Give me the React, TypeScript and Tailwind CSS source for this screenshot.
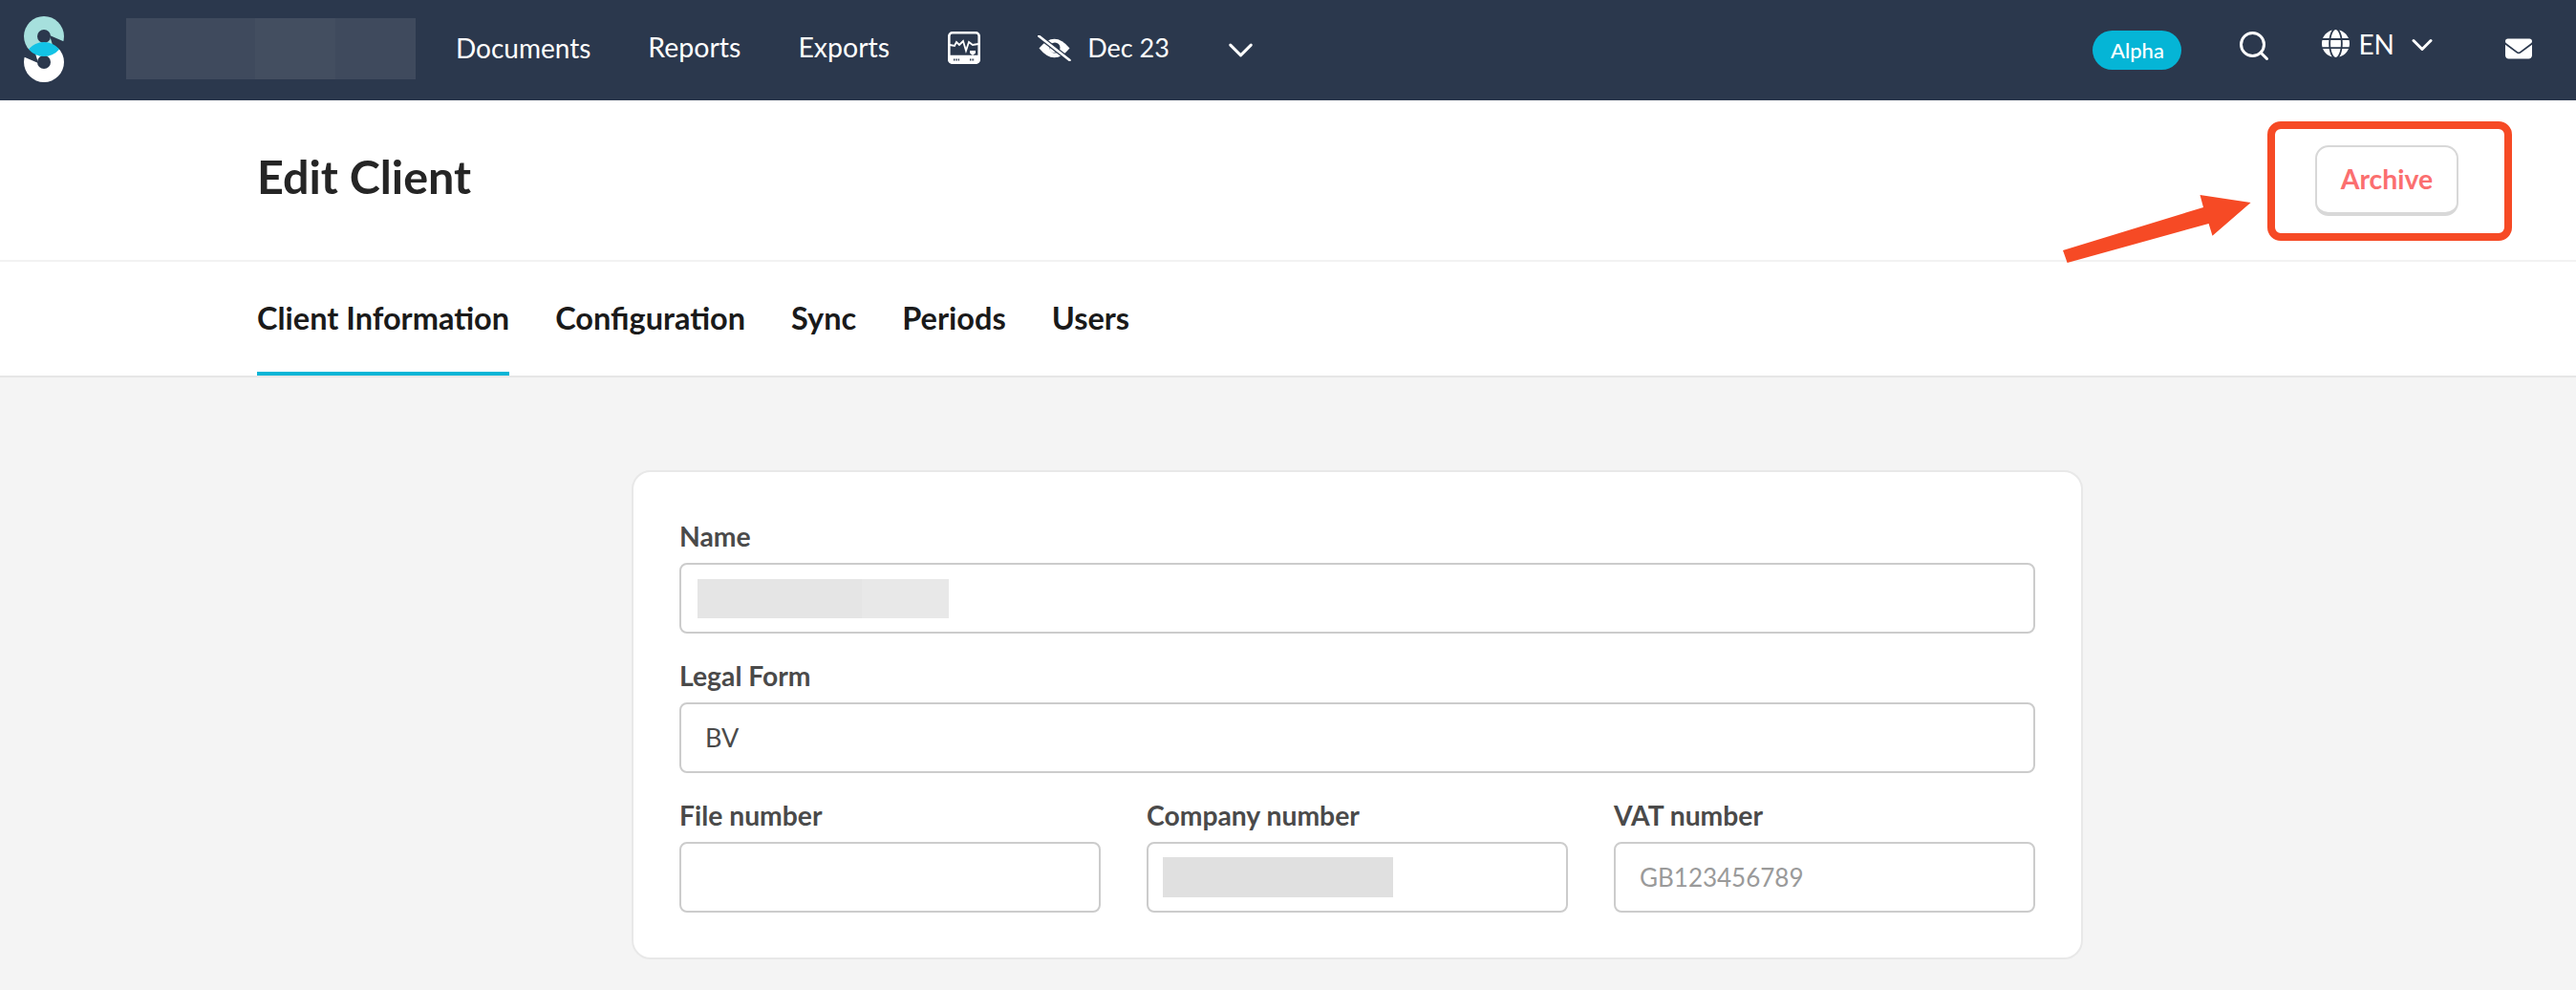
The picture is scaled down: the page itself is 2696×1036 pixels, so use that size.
import type { ReactNode } from 'react';
import { Search, ChevronDown } from 'lucide-react';
import { FaGlobe, FaEnvelope } from 'react-icons/fa6';

const navLink = 'text-[28px] leading-none text-white pb-[6px]';
const navLinkWide = 'text-[28.5px] leading-none text-white pb-[6px] ml-[60px]';
const tab = 'pt-[39px] text-[32.5px] leading-[40px] font-bold text-[#1a1a1a]';

function Logo() {
  return (
    <svg viewBox="0 0 42 69" className="w-[42px] h-[69px] shrink-0">
      <circle cx="21" cy="48" r="21" fill="#fff" />
      <circle cx="21" cy="21" r="21" fill="#a6e0dd" />
      <path d="M27 20 L43 27 L44 34.5 L38 35 L30 30 Z" fill="#2b384d" />
      <path d="M15 49 L-1 42 L-2 34.5 L4 34 L12 39 Z" fill="#2b384d" />
      <circle cx="21" cy="21" r="7" fill="#2b384d" />
      <circle cx="21" cy="48" r="7" fill="#2b384d" />
      <path d="M4.9 34.5 A21 21 0 0 1 37.1 34.5 A21 21 0 0 1 4.9 34.5 Z" fill="#13c3e6" />
    </svg>
  );
}

function MonitorIcon() {
  return (
    <svg viewBox="0 0 34 34" fill="none" stroke="#fff" strokeWidth="2.6" className="w-[34px] h-[34px] mb-[5px] ml-[61px]">
      <rect x="1.3" y="1.3" width="31.4" height="31.4" rx="3.5" />
      <path d="M1.3 26 H32.7 V29.2 a3.5 3.5 0 0 1 -3.5 3.5 H4.8 a3.5 3.5 0 0 1 -3.5 -3.5 Z" fill="#fff" stroke="#fff" />
      <path d="M2 14 L7 15 L9 11 L12 14 L16 10 L19 20 L22 11 L26 14 L32 13" strokeWidth="1.8" />
      <path d="M23 20 h6 v2.5 l-3 2.5 l-3 -2.5 Z" fill="#fff" stroke="none" />
      <path d="M6 29.5 h6 M23 29.5 h5" stroke="#2b384d" strokeWidth="2" strokeDasharray="1.4 1" />
    </svg>
  );
}

function EyeOffIcon() {
  return (
    <svg viewBox="0 0 35 27" className="w-[35px] h-[27px] mb-[5px] ml-[60px]">
      <path d="M1.5 13.5 Q17.5 -6 33.5 13.5 Q17.5 33 1.5 13.5 Z" fill="#fff" />
      <circle cx="18" cy="13" r="5.5" fill="#2b384d" />
      <circle cx="16.5" cy="14.5" r="3.6" fill="#fff" />
      <path d="M1 0.5 L33.5 26" stroke="#2b384d" strokeWidth="5" />
      <path d="M1 0.5 L33.5 26" stroke="#fff" strokeWidth="2.6" strokeLinecap="round" />
    </svg>
  );
}

function Field({ label, children, className }: { label: string; children?: ReactNode; className?: string }) {
  return (
    <div className={className}>
      <div className="text-[28.3px] leading-[34px] font-bold text-[#4a4a4a] mb-[11px]">{label}</div>
      <div className="h-[74px] border-2 border-[#cccccc] rounded-[8px] bg-white flex items-center">
        {children}
      </div>
    </div>
  );
}

export default function App() {
  return (
    <div className="relative w-[2696px] h-[1036px] overflow-hidden bg-[#f4f4f4] font-['Lato',sans-serif]">
      {/* Top nav */}
      <nav className="h-[105px] bg-[#2b384d] flex items-center text-white">
        <div className="ml-[25px] mb-[3px]"><Logo /></div>
        <div className="ml-[65px] mb-[3px] w-[303px] h-[64px] bg-[#3f4a5d] flex">
          <div className="ml-[135px] w-[84px] bg-[#434e60]" />
        </div>
        <div className="ml-[42px] flex items-center">
          <span className={navLink}>Documents</span>
          <span className={navLinkWide}>Reports</span>
          <span className={navLinkWide}>Exports</span>
          <MonitorIcon />
          <EyeOffIcon />
          <span className="text-[27px] leading-none text-white pb-[6px] ml-[17px]">Dec 23</span>
          <ChevronDown className="ml-[53px] w-[43px] h-[43px]" strokeWidth={1.7} />
        </div>
        <div className="ml-auto flex items-center">
          <span className="w-[93px] h-[41px] rounded-full bg-[#05b5d6] flex items-center justify-center text-[22px] font-medium">Alpha</span>
          <Search className="ml-[58px] w-[36px] h-[36px] -mt-[9px]" strokeWidth={2} />
          <FaGlobe className="ml-[53px] w-[29px] h-[29px] -mt-[15px]" />
          <span className={`${navLink} ml-[9px] -mt-[8px]`}>EN</span>
          <ChevronDown className="ml-[11px] w-[36px] h-[36px] -mt-[11px]" strokeWidth={2} />
          <FaEnvelope className="ml-[69px] mr-[46px] w-[28px] h-[28px] -mt-[4px]" />
        </div>
      </nav>

      {/* Title row */}
      <header className="h-[169px] bg-white border-b-2 border-[#f2f2f2] flex items-center justify-between pl-[269px] pr-[123px]">
        <h1 className="text-[48.5px] leading-none font-bold text-[#252525] -mt-[8px]">Edit Client</h1>
        <button className="w-[150px] h-[74px] border-2 border-b-[4px] border-[#d8d8d8] rounded-[14px] text-[28.4px] font-bold text-[#fb6f6f]">Archive</button>
      </header>

      {/* Tabs */}
      <div className="h-[121px] bg-white border-b-2 border-[#e6e6e6] flex gap-[48px] pl-[269px]">
        <div className={`${tab} h-[119px] border-b-4 border-[#05b5d6]`}>Client Information</div>
        <div className={tab}>Configuration</div>
        <div className={tab}>Sync</div>
        <div className={tab}>Periods</div>
        <div className={tab}>Users</div>
      </div>

      {/* Form card */}
      <div className="mt-[97px] ml-[661px] w-[1519px] h-[512px] bg-white border-2 border-[#e8e8e8] rounded-[20px] px-[48px] pt-[50px]">
        <Field label="Name">
          <div className="ml-[17px] w-[263px] h-[41px] bg-[#e5e5e5] flex">
            <div className="ml-[172px] w-[91px] bg-[#e8e8e8]" />
          </div>
        </Field>
        <Field label="Legal Form" className="mt-[27px]">
          <span className="ml-[25px] text-[27px] text-[#4a4a4a]">BV</span>
        </Field>
        <div className="mt-[27px] grid grid-cols-3 gap-[48px]">
          <Field label="File number" />
          <Field label="Company number">
            <div className="ml-[15px] w-[241px] h-[42px] bg-[#e0e0e0]" />
          </Field>
          <Field label="VAT number">
            <span className="ml-[25px] text-[26px] text-[#9a9a9a]">GB123456789</span>
          </Field>
        </div>
      </div>

      {/* Annotation */}
      <div className="absolute left-[2373px] top-[127px] w-[256px] h-[125px] border-[8px] border-[#f64a25] rounded-[14px]" />
      <svg className="absolute left-[2150px] top-[195px] w-[215px] h-[90px]" viewBox="2150 195 215 90">
        <path d="M2159 262 L2306 217 L2302.5 204 L2355.6 212 L2315.5 246.7 L2311.6 234 L2163.6 275 Z" fill="#f64a25" />
      </svg>
    </div>
  );
}
